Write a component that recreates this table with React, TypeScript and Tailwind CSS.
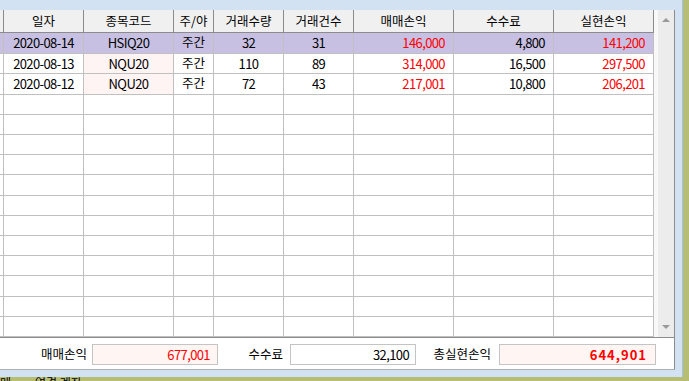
import React from 'react'

interface Trade {
  date: string
  code: string
  session: string
  qty: string
  count: string
  pnl: string
  fee: string
  net: string
}

const trades: Trade[] = [
  { date: '2020-08-14', code: 'HSIQ20', session: '주간', qty: '32', count: '31', pnl: '146,000', fee: '4,800', net: '141,200' },
  { date: '2020-08-13', code: 'NQU20', session: '주간', qty: '110', count: '89', pnl: '314,000', fee: '16,500', net: '297,500' },
  { date: '2020-08-12', code: 'NQU20', session: '주간', qty: '72', count: '43', pnl: '217,001', fee: '10,800', net: '206,201' },
]

const font = { fontFamily: '"Noto Sans CJK KR", "Noto Sans", sans-serif' }

function HeaderRow() {
  const cell = 'h-full flex items-center justify-center border-r border-[#8c8c8c] shrink-0'
  return (
    <div className="flex h-[24px] bg-[#f0f0f0] border-b border-[#8c8c8c] text-[12.5px] text-black">
      <div className={`${cell} w-[4px]`}></div>
      <div className={`${cell} w-[80px]`}>일자</div>
      <div className={`${cell} w-[90px]`}>종목코드</div>
      <div className={`${cell} w-[40px]`}>주/야</div>
      <div className={`${cell} w-[70px]`}>거래수량</div>
      <div className={`${cell} w-[70px]`}>거래건수</div>
      <div className={`${cell} w-[100px]`}>매매손익</div>
      <div className={`${cell} w-[100px]`}>수수료</div>
      <div className={`${cell} w-[100px]`}>실현손익</div>
    </div>
  )
}

function BodyRow({ trade, selected }: { trade?: Trade; selected?: boolean }) {
  const cell = 'h-full flex items-center border-r border-[#c0c0c0] shrink-0'
  const num = 'text-[13px] tracking-[-0.6px]'
  return (
    <div className={`flex h-[21px] border-b border-[#c0c0c0] text-[12.5px] ${selected ? 'bg-[#c7c0e3]' : 'bg-white'}`}>
      <div className={`${cell} w-[4px]`}></div>
      <div className={`${cell} w-[80px] justify-center ${num}`}>{trade?.date}</div>
      <div className={`${cell} w-[90px] justify-center ${num} ${trade && !selected ? 'bg-[#fff4f4]' : ''}`}>{trade?.code}</div>
      <div className={`${cell} w-[40px] justify-center`}>{trade?.session}</div>
      <div className={`${cell} w-[70px] justify-center ${num}`}>{trade?.qty}</div>
      <div className={`${cell} w-[70px] justify-center ${num}`}>{trade?.count}</div>
      <div className={`${cell} w-[100px] justify-end pr-[8px] text-[#ff0000] ${num}`}>{trade?.pnl}</div>
      <div className={`${cell} w-[100px] justify-end pr-[8px] ${num}`}>{trade?.fee}</div>
      <div className={`${cell} w-[100px] justify-end pr-[8px] text-[#ff0000] ${num}`}>{trade?.net}</div>
    </div>
  )
}

export default function App() {
  const empty = Array.from({ length: 12 })
  return (
    <div className="w-[689px] h-[381px] bg-[#b8bd74] overflow-hidden relative" style={font}>
      <div className="w-[683px] h-[377px] bg-[#d3e2f3] border-r border-[#9fc3ee] pt-[10px] pr-[7px]">
        <div className="w-[675px] h-[360px] bg-white border-r border-[#8c8c8c] border-b border-b-[#b0b0b0] flex flex-col">
          {/* grid */}
          <div className="flex h-[328px] border-b border-[#8c8c8c] overflow-hidden">
            <div className="w-[654px] shrink-0 flex flex-col text-black">
              <HeaderRow />
              {trades.map((t, i) => (
                <BodyRow key={t.date} trade={t} selected={i === 0} />
              ))}
              {empty.map((_, i) => (
                <BodyRow key={i} />
              ))}
            </div>
            <div className="w-[20px] shrink-0 bg-[#ececec] border-l-[4px] border-[#f8f8f8] flex flex-col items-center justify-between pt-[8px] pb-[8px]">
              <div className="w-0 h-0 border-l-[4px] border-r-[4px] border-b-[4px] border-l-transparent border-r-transparent border-b-[#9a9a9a]"></div>
              <div className="w-0 h-0 border-l-[4px] border-r-[4px] border-t-[4px] border-l-transparent border-r-transparent border-t-[#9a9a9a]"></div>
            </div>
          </div>
          {/* footer totals */}
          <div className="flex items-start pt-[6px] text-[12.5px] text-black">
            <div className="w-[87px] h-[21px] flex items-center justify-end">매매손익</div>
            <div className="ml-[5px] w-[126px] h-[21px] bg-[#fff5f2] border border-[#c4c4c4] flex items-center justify-end pr-[7px] text-[#ff0000] text-[13px] tracking-[-0.6px]">677,001</div>
            <div className="w-[65px] h-[21px] flex items-center justify-end">수수료</div>
            <div className="ml-[7px] w-[126px] h-[21px] bg-white border border-[#c4c4c4] flex items-center justify-end pr-[6px] text-[13px] tracking-[-0.6px]">32,100</div>
            <div className="w-[75px] h-[21px] flex items-center justify-end">총실현손익</div>
            <div className="ml-[8px] w-[157px] h-[21px] bg-[#fff5f2] border border-[#c4c4c4] flex items-center justify-end pr-[8px] text-[#ff0000] font-bold text-[13px] tracking-[1px]">644,901</div>
          </div>
        </div>
      </div>
      <div className="absolute left-[0px] top-[377px] text-[12px] text-black whitespace-nowrap leading-none">
        <span className="mr-[24px]">메</span>
        <span>연결 계좌</span>
      </div>
    </div>
  )
}
